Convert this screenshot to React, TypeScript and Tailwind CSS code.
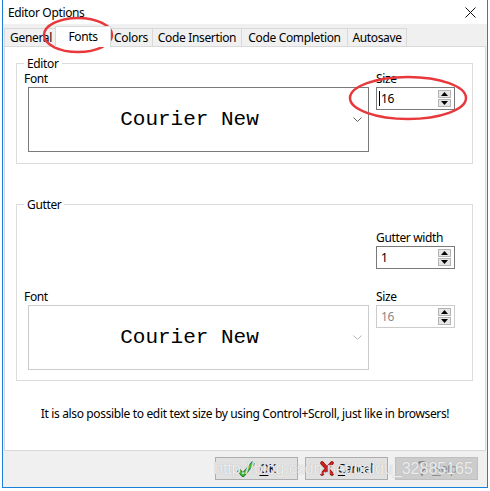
// Editor Options dialog — Fonts tab

const TABS = [
  { label: "General", w: "w-[53px]" },
  { label: "Fonts", w: "w-[56px]", active: true },
  { label: "Colors", w: "w-[43px]" },
  { label: "Code Insertion", w: "w-[89px]" },
  { label: "Code Completion", w: "w-[106px]" },
  { label: "Autosave", w: "w-[60px]" },
];

export default function App() {
  return (
    <div className="relative w-[490px] h-[491px] bg-white pl-[2px] font-['Noto_Sans',sans-serif] text-[12px] leading-[15px] tracking-[-0.35px] text-black">
      <div className="w-[486px] h-[488px] border-x border-b border-[#1a80d9] flex flex-col bg-[#f0f0f0]">
        {/* 타이틀 바 */}
        <div className="h-[24px] bg-white flex items-center pl-[5px] pr-[11px]">
          <span className="flex-1">Editor Options</span>
          <CloseIcon />
        </div>

        {/* 탭 */}
        <div className="h-[22px] flex items-end ml-[1px]">
          {TABS.map((t, i) =>
            t.active ? (
              <div
                key={t.label}
                className={`relative z-10 -mx-[2px] -mb-px h-[21px] ${t.w} bg-white border-x border-t border-[#d9d9d9] flex items-center justify-center pb-[2px]`}
              >
                {t.label}
              </div>
            ) : (
              <div
                key={t.label}
                className={`h-[18px] ${t.w} border-t border-l border-[#d9d9d9] flex items-center justify-center ${
                  i === TABS.length - 1 ? "border-r" : ""
                }`}
              >
                {t.label}
              </div>
            )
          )}
        </div>

        {/* 탭 페이지 */}
        <div className="mx-[1px] h-[405px] bg-white border border-[#d9d9d9] flex flex-col">
          <fieldset className="mt-[9px] ml-[11px] mr-[12px] border border-[#dcdcdc] pl-[7px] pb-[11px]">
            <legend className="px-[3px]">Editor</legend>
            <div className="flex">
              <div className="flex flex-col">
                <span>Font</span>
                <FontCombo />
              </div>
              <div className="ml-[7px] flex flex-col">
                <span>Size</span>
                <SpinBox value="16" caret />
              </div>
            </div>
          </fieldset>

          <fieldset className="mt-[33px] ml-[11px] mr-[12px] border border-[#dcdcdc] pl-[7px] pb-[10px]">
            <legend className="px-[3px]">Gutter</legend>
            <div className="mt-[18px] ml-[352px] flex flex-col">
              <span>Gutter width</span>
              <SpinBox value="1" />
            </div>
            <div className="mt-[20px] flex">
              <div className="flex flex-col">
                <span>Font</span>
                <FontCombo disabled />
              </div>
              <div className="ml-[7px] flex flex-col">
                <span>Size</span>
                <SpinBox value="16" disabled />
              </div>
            </div>
          </fieldset>

          <p className="mt-[25px] leading-[16px] text-center">
            It is also possible to edit text size by using Control+Scroll, just like in browsers!
          </p>
        </div>

        {/* 하단 버튼 */}
        <div className="flex justify-end gap-[7px] pt-[6px] pr-[9px]">
          <DialogButton icon={<CheckIcon />} accel="O" rest="K" />
          <DialogButton icon={<CrossIcon />} accel="C" rest="ancel" />
          <DialogButton icon={<HelpIcon />} accel="H" rest="elp" disabled />
        </div>
      </div>

      {/* 워터마크 */}
      <span className="absolute left-[214px] top-[459px] font-['Liberation_Sans',sans-serif] text-[16px] leading-[20px] tracking-normal text-white/80 [text-shadow:0_0_1px_#a0a0a0] pointer-events-none whitespace-nowrap">
        http://blog.csdn.net/baidu_32885165
      </span>

      {/* 빨간 동그라미 표시 */}
      <svg
        className="absolute inset-0 pointer-events-none"
        width="490"
        height="491"
        viewBox="0 0 490 491"
        fill="none"
      >
        <ellipse cx="78" cy="35" rx="34" ry="17" stroke="#e8383b" strokeWidth="2.5" />
        <ellipse cx="408" cy="98" rx="58" ry="21" stroke="#e8383b" strokeWidth="2.5" />
      </svg>
    </div>
  );
}

// =====================================================================
// 폰트 콤보박스 (큰 미리보기)
// =====================================================================
function FontCombo({ disabled }: { disabled?: boolean }) {
  return (
    <div
      className={`mt-px ml-[4px] w-[341px] h-[65px] border ${
        disabled ? "border-[#cccccc]" : "border-[#7a7a7a]"
      } flex items-center`}
    >
      <span className="flex-1 pl-px text-center font-['Liberation_Mono',monospace] text-[21px] leading-[24px] tracking-normal text-black">
        Courier New
      </span>
      <svg width="9" height="5" viewBox="0 0 9 5" className="mr-[6px] ml-[4px]" aria-hidden>
        <path d="M0.5 0.5 L4.5 4.5 L8.5 0.5" stroke={disabled ? "#b5b5b5" : "#606060"} strokeWidth="1" fill="none" />
      </svg>
    </div>
  );
}

// =====================================================================
// 스핀 박스
// =====================================================================
function SpinBox({ value, disabled, caret }: { value: string; disabled?: boolean; caret?: boolean }) {
  return (
    <div
      className={`mt-px w-[79px] h-[23px] bg-white border ${
        disabled ? "border-[#cccccc]" : "border-[#7a7a7a]"
      } flex items-center pl-[2px] pr-[3px]`}
    >
      {caret ? <span className="w-px h-[15px] bg-black mr-px" /> : <span className="w-[2px]" />}
      <span className={`flex-1 ${disabled ? "text-[#8a8a8a]" : "text-black"}`}>{value}</span>
      <div className="flex flex-col gap-px">
        <SpinArrow up />
        <SpinArrow />
      </div>
    </div>
  );
}

function SpinArrow({ up }: { up?: boolean }) {
  return (
    <div className="w-[13px] h-[8px] bg-[#e6e6e6] border border-[#b4b4b4] flex items-center justify-center">
      <svg width="7" height="4" viewBox="0 0 7 4" aria-hidden>
        <path d={up ? "M0 4 L3.5 0 L7 4 Z" : "M0 0 L3.5 4 L7 0 Z"} fill="#000" />
      </svg>
    </div>
  );
}

// =====================================================================
// 하단 버튼
// =====================================================================
function DialogButton({
  icon,
  accel,
  rest,
  disabled,
}: {
  icon: React.ReactNode;
  accel: string;
  rest: string;
  disabled?: boolean;
}) {
  return (
    <button
      type="button"
      className={`w-[83px] h-[23px] border flex items-center justify-center gap-[4px] ${
        disabled ? "bg-[#cccccc] border-[#bfbfbf] text-[#8d8d8d]" : "bg-[#e1e1e1] border-[#adadad] text-black"
      }`}
    >
      {icon}
      <span>
        <span className="underline underline-offset-2">{accel}</span>
        {rest}
      </span>
    </button>
  );
}

// =====================================================================
// 아이콘들
// =====================================================================
function CloseIcon() {
  return (
    <svg width="11" height="11" viewBox="0 0 11 11" aria-hidden>
      <path d="M0.5 0.5 L10.5 10.5 M10.5 0.5 L0.5 10.5" stroke="#111" strokeWidth="1" />
    </svg>
  );
}

function CheckIcon() {
  return (
    <svg width="18" height="16" viewBox="0 0 18 16" aria-hidden>
      <path d="M1.5 9 L6 14 L16.5 1.5" stroke="#1f6b1f" strokeWidth="4" fill="none" strokeLinejoin="round" />
      <path d="M1.5 9 L6 14 L16.5 1.5" stroke="#3bbf2e" strokeWidth="2.4" fill="none" strokeLinejoin="round" />
    </svg>
  );
}

function CrossIcon() {
  return (
    <svg width="14" height="15" viewBox="0 0 14 15" aria-hidden>
      <path d="M2 2 L12 13 M12 2 L2 13" stroke="#8c0f0f" strokeWidth="3.6" strokeLinecap="round" />
      <path d="M2 2 L12 13 M12 2 L2 13" stroke="#d62020" strokeWidth="2" strokeLinecap="round" />
    </svg>
  );
}

function HelpIcon() {
  return (
    <svg width="12" height="15" viewBox="0 0 12 15" aria-hidden>
      <path
        d="M2 5 A4 4 0 1 1 7.5 8.5 C6.3 9.2 6 9.8 6 11"
        stroke="#8a8a8a"
        strokeWidth="2"
        fill="none"
      />
      <circle cx="6" cy="13.5" r="1.2" fill="#8a8a8a" />
    </svg>
  );
}
